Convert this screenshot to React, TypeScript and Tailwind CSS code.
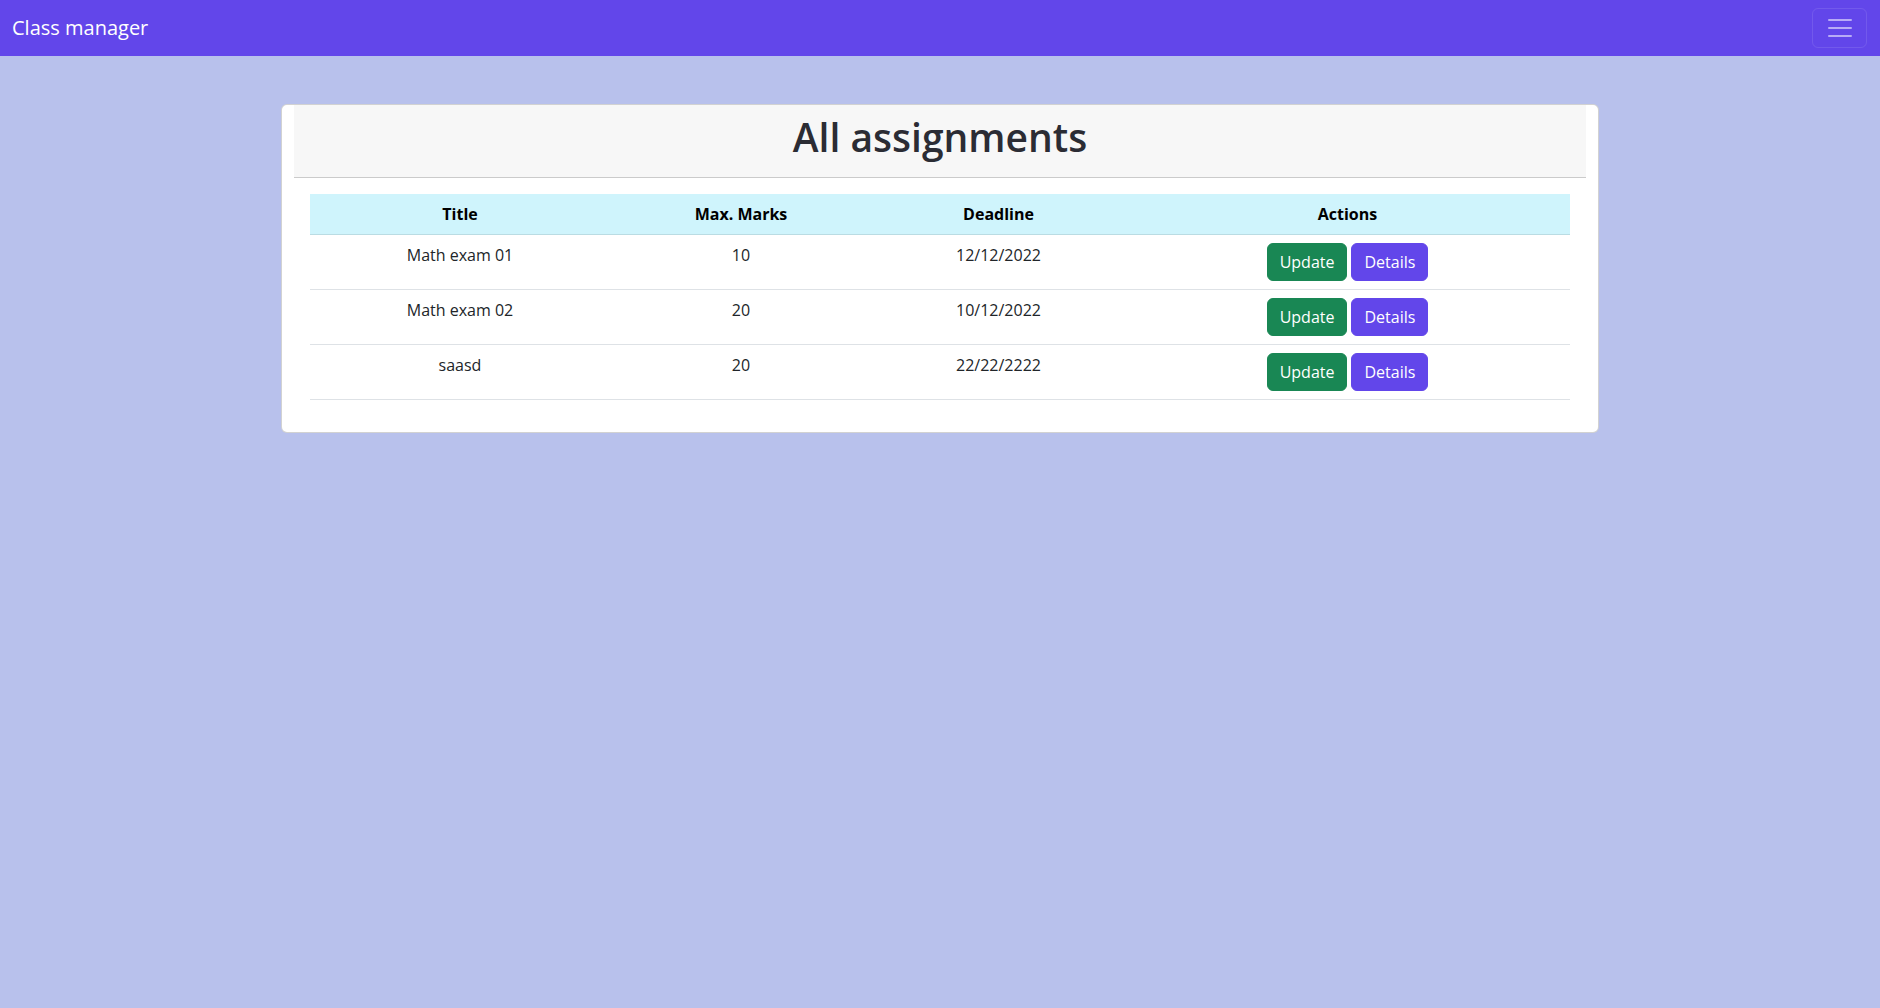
import React from 'react';

type Assignment = {
  title: string;
  marks: number;
  deadline: string;
};

const assignments: Assignment[] = [
  { title: 'Math exam 01', marks: 10, deadline: '12/12/2022' },
  { title: 'Math exam 02', marks: 20, deadline: '10/12/2022' },
  { title: 'saasd', marks: 20, deadline: '22/22/2222' },
];

function Navbar() {
  return (
    <nav className="h-14 bg-[#6246ea] flex items-center justify-between pl-3 pr-[13px]">
      <span className="text-[20px] leading-[30px] text-[#fffffe]">Class manager</span>
      <button
        type="button"
        className="w-[55px] h-10 flex items-center justify-center rounded-md border border-white/10"
      >
        <svg width="30" height="30" viewBox="0 0 30 30">
          <path
            d="M4 7h22M4 15h22M4 23h22"
            stroke="rgba(255,255,255,0.55)"
            strokeWidth="2"
            strokeLinecap="round"
          />
        </svg>
      </button>
    </nav>
  );
}

export default function App() {
  return (
    <div className="min-h-screen bg-[#b8c1ec] font-['Open_Sans','Noto_Sans',sans-serif]">
      <Navbar />

      <div className="pt-12">
        <div className="mx-auto w-[1318px] bg-white border border-black/[.175] rounded-md px-3">
          {/* en-tête de la carte */}
          <div className="bg-[#f7f7f7] border-b border-black/[.175] pt-2 pb-2 text-center">
            <h1 className="text-[39px] leading-[48px] mb-2 font-semibold text-[#2b2c34]">
              All assignments
            </h1>
          </div>

          <div className="p-4 pb-8">
            <table className="w-full table-fixed border-collapse text-[16px] leading-6">
              <colgroup>
                <col className="w-[300px]" />
                <col className="w-[262px]" />
                <col className="w-[253px]" />
                <col />
              </colgroup>
              <thead>
                <tr className="bg-[#cff4fc] text-black">
                  <th className="p-2 font-bold border-b border-[#badce3] align-bottom">Title</th>
                  <th className="p-2 font-bold border-b border-[#badce3] align-bottom">Max. Marks</th>
                  <th className="p-2 font-bold border-b border-[#badce3] align-bottom">Deadline</th>
                  <th className="p-2 font-bold border-b border-[#badce3] align-bottom">Actions</th>
                </tr>
              </thead>
              <tbody className="text-[#212529]">
                {assignments.map((a) => (
                  <tr key={a.title} className="border-b border-[#dee2e6]">
                    <td className="p-2 text-center align-top">{a.title}</td>
                    <td className="p-2 text-center align-top">{a.marks}</td>
                    <td className="p-2 text-center align-top">{a.deadline}</td>
                    <td className="p-2 align-top">
                      <div className="flex justify-center gap-1">
                        <button
                          type="button"
                          className="px-3 py-1.5 rounded-md border border-[#198754] bg-[#198754] text-white leading-6"
                        >
                          Update
                        </button>
                        <button
                          type="button"
                          className="px-3 py-1.5 rounded-md border border-[#6246ea] bg-[#6246ea] text-[#fffffe] leading-6"
                        >
                          Details
                        </button>
                      </div>
                    </td>
                  </tr>
                ))}
              </tbody>
            </table>
          </div>
        </div>
      </div>
    </div>
  );
}
